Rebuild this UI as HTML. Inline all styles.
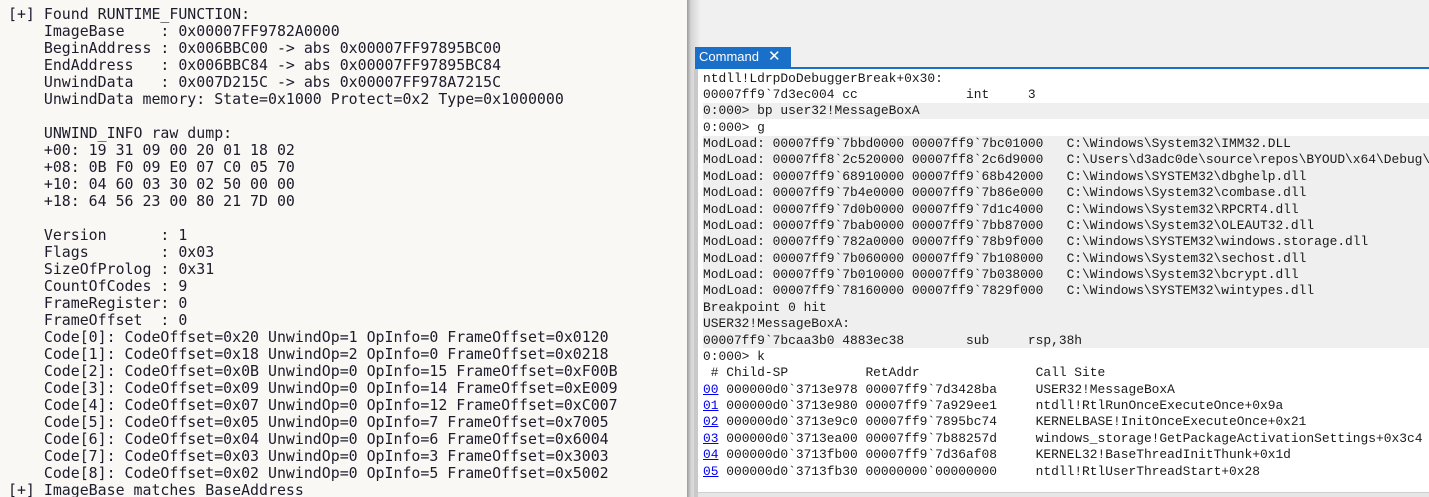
<!DOCTYPE html>
<html><head><meta charset="utf-8"><style>
html,body{margin:0;padding:0;width:1429px;height:497px;overflow:hidden;background:#faf8f4;position:relative}
#left{position:absolute;left:0;top:0;width:688px;height:497px;background:#faf8f4}
#left pre{position:absolute;left:8px;top:6px;margin:0;font-family:"DejaVu Sans Mono","Liberation Mono",monospace;font-size:14.9px;line-height:17px;color:#1c1c2c}
#shadow{position:absolute;left:687px;top:0;width:13px;height:497px;background:linear-gradient(to right,#9a9a9a,#d4d4d4 30%,#eeeeee)}
#right{position:absolute;left:695px;top:0;width:734px;height:497px;background:#f0f0f0}
#tab{position:absolute;left:695px;top:47px;width:96px;height:20px;background:#1a6fc9;color:#fff;font-family:"Liberation Sans",sans-serif;font-size:13px;line-height:20px}
#tab span{position:absolute;left:4px;top:0}
#tab b{position:absolute;left:73px;top:0;font-weight:normal;font-size:15px}
#bline{position:absolute;left:695px;top:67px;width:734px;height:2px;background:#1a6fc9}
#vb{position:absolute;left:694px;top:69px;width:4px;height:428px;background:#c9c9c9}
#content{position:absolute;left:698px;top:69px;width:731px;height:423px;background:#fff}
.sh{position:absolute;left:703px;width:726px;background:#efefef}
#content2{position:absolute;left:703px;top:70.5px;margin:0;font-family:"Liberation Mono",monospace;font-size:12.9px;line-height:16.375px;color:#1a1a1a;white-space:pre}
a{color:#0000ee;text-decoration:underline}
#sb{position:absolute;left:698px;top:492px;width:731px;height:5px;background:#e6e6e6;border-top:1px solid #cfcfcf}
</style></head><body>
<div id="left"><pre>[+] Found RUNTIME_FUNCTION:
    ImageBase    : 0x00007FF9782A0000
    BeginAddress : 0x006BBC00 -> abs 0x00007FF97895BC00
    EndAddress   : 0x006BBC84 -> abs 0x00007FF97895BC84
    UnwindData   : 0x007D215C -> abs 0x00007FF978A7215C
    UnwindData memory: State=0x1000 Protect=0x2 Type=0x1000000

    UNWIND_INFO raw dump:
    +00: 19 31 09 00 20 01 18 02
    +08: 0B F0 09 E0 07 C0 05 70
    +10: 04 60 03 30 02 50 00 00
    +18: 64 56 23 00 80 21 7D 00

    Version      : 1
    Flags        : 0x03
    SizeOfProlog : 0x31
    CountOfCodes : 9
    FrameRegister: 0
    FrameOffset  : 0
    Code[0]: CodeOffset=0x20 UnwindOp=1 OpInfo=0 FrameOffset=0x0120
    Code[1]: CodeOffset=0x18 UnwindOp=2 OpInfo=0 FrameOffset=0x0218
    Code[2]: CodeOffset=0x0B UnwindOp=0 OpInfo=15 FrameOffset=0xF00B
    Code[3]: CodeOffset=0x09 UnwindOp=0 OpInfo=14 FrameOffset=0xE009
    Code[4]: CodeOffset=0x07 UnwindOp=0 OpInfo=12 FrameOffset=0xC007
    Code[5]: CodeOffset=0x05 UnwindOp=0 OpInfo=7 FrameOffset=0x7005
    Code[6]: CodeOffset=0x04 UnwindOp=0 OpInfo=6 FrameOffset=0x6004
    Code[7]: CodeOffset=0x03 UnwindOp=0 OpInfo=3 FrameOffset=0x3003
    Code[8]: CodeOffset=0x02 UnwindOp=0 OpInfo=5 FrameOffset=0x5002
[+] ImageBase matches BaseAddress</pre></div>
<div id="right"></div>
<div id="shadow"></div>
<div id="tab"><span>Command</span><b>✕</b></div>
<div id="bline"></div>
<div id="content"></div>
<div id="vb"></div>
<div class="sh" style="top:103px;height:16.4px"></div>
<div class="sh" style="top:135.5px;height:212px"></div>
<pre id="content2">ntdll!LdrpDoDebuggerBreak+0x30:
00007ff9`7d3ec004 cc              int     3
0:000> bp user32!MessageBoxA
0:000> g
ModLoad: 00007ff9`7bbd0000 00007ff9`7bc01000   C:\Windows\System32\IMM32.DLL
ModLoad: 00007ff8`2c520000 00007ff8`2c6d9000   C:\Users\d3adc0de\source\repos\BYOUD\x64\Debug\BYOUD.dll
ModLoad: 00007ff9`68910000 00007ff9`68b42000   C:\Windows\SYSTEM32\dbghelp.dll
ModLoad: 00007ff9`7b4e0000 00007ff9`7b86e000   C:\Windows\System32\combase.dll
ModLoad: 00007ff9`7d0b0000 00007ff9`7d1c4000   C:\Windows\System32\RPCRT4.dll
ModLoad: 00007ff9`7bab0000 00007ff9`7bb87000   C:\Windows\System32\OLEAUT32.dll
ModLoad: 00007ff9`782a0000 00007ff9`78b9f000   C:\Windows\SYSTEM32\windows.storage.dll
ModLoad: 00007ff9`7b060000 00007ff9`7b108000   C:\Windows\System32\sechost.dll
ModLoad: 00007ff9`7b010000 00007ff9`7b038000   C:\Windows\System32\bcrypt.dll
ModLoad: 00007ff9`78160000 00007ff9`7829f000   C:\Windows\SYSTEM32\wintypes.dll
Breakpoint 0 hit
USER32!MessageBoxA:
00007ff9`7bcaa3b0 4883ec38        sub     rsp,38h
0:000> k
 # Child-SP          RetAddr               Call Site
<a>00</a> 000000d0`3713e978 00007ff9`7d3428ba     USER32!MessageBoxA
<a>01</a> 000000d0`3713e980 00007ff9`7a929ee1     ntdll!RtlRunOnceExecuteOnce+0x9a
<a>02</a> 000000d0`3713e9c0 00007ff9`7895bc74     KERNELBASE!InitOnceExecuteOnce+0x21
<a>03</a> 000000d0`3713ea00 00007ff9`7b88257d     windows_storage!GetPackageActivationSettings+0x3c4
<a>04</a> 000000d0`3713fb00 00007ff9`7d36af08     KERNEL32!BaseThreadInitThunk+0x1d
<a>05</a> 000000d0`3713fb30 00000000`00000000     ntdll!RtlUserThreadStart+0x28</pre>
<div id="sb"></div>
</body></html>
